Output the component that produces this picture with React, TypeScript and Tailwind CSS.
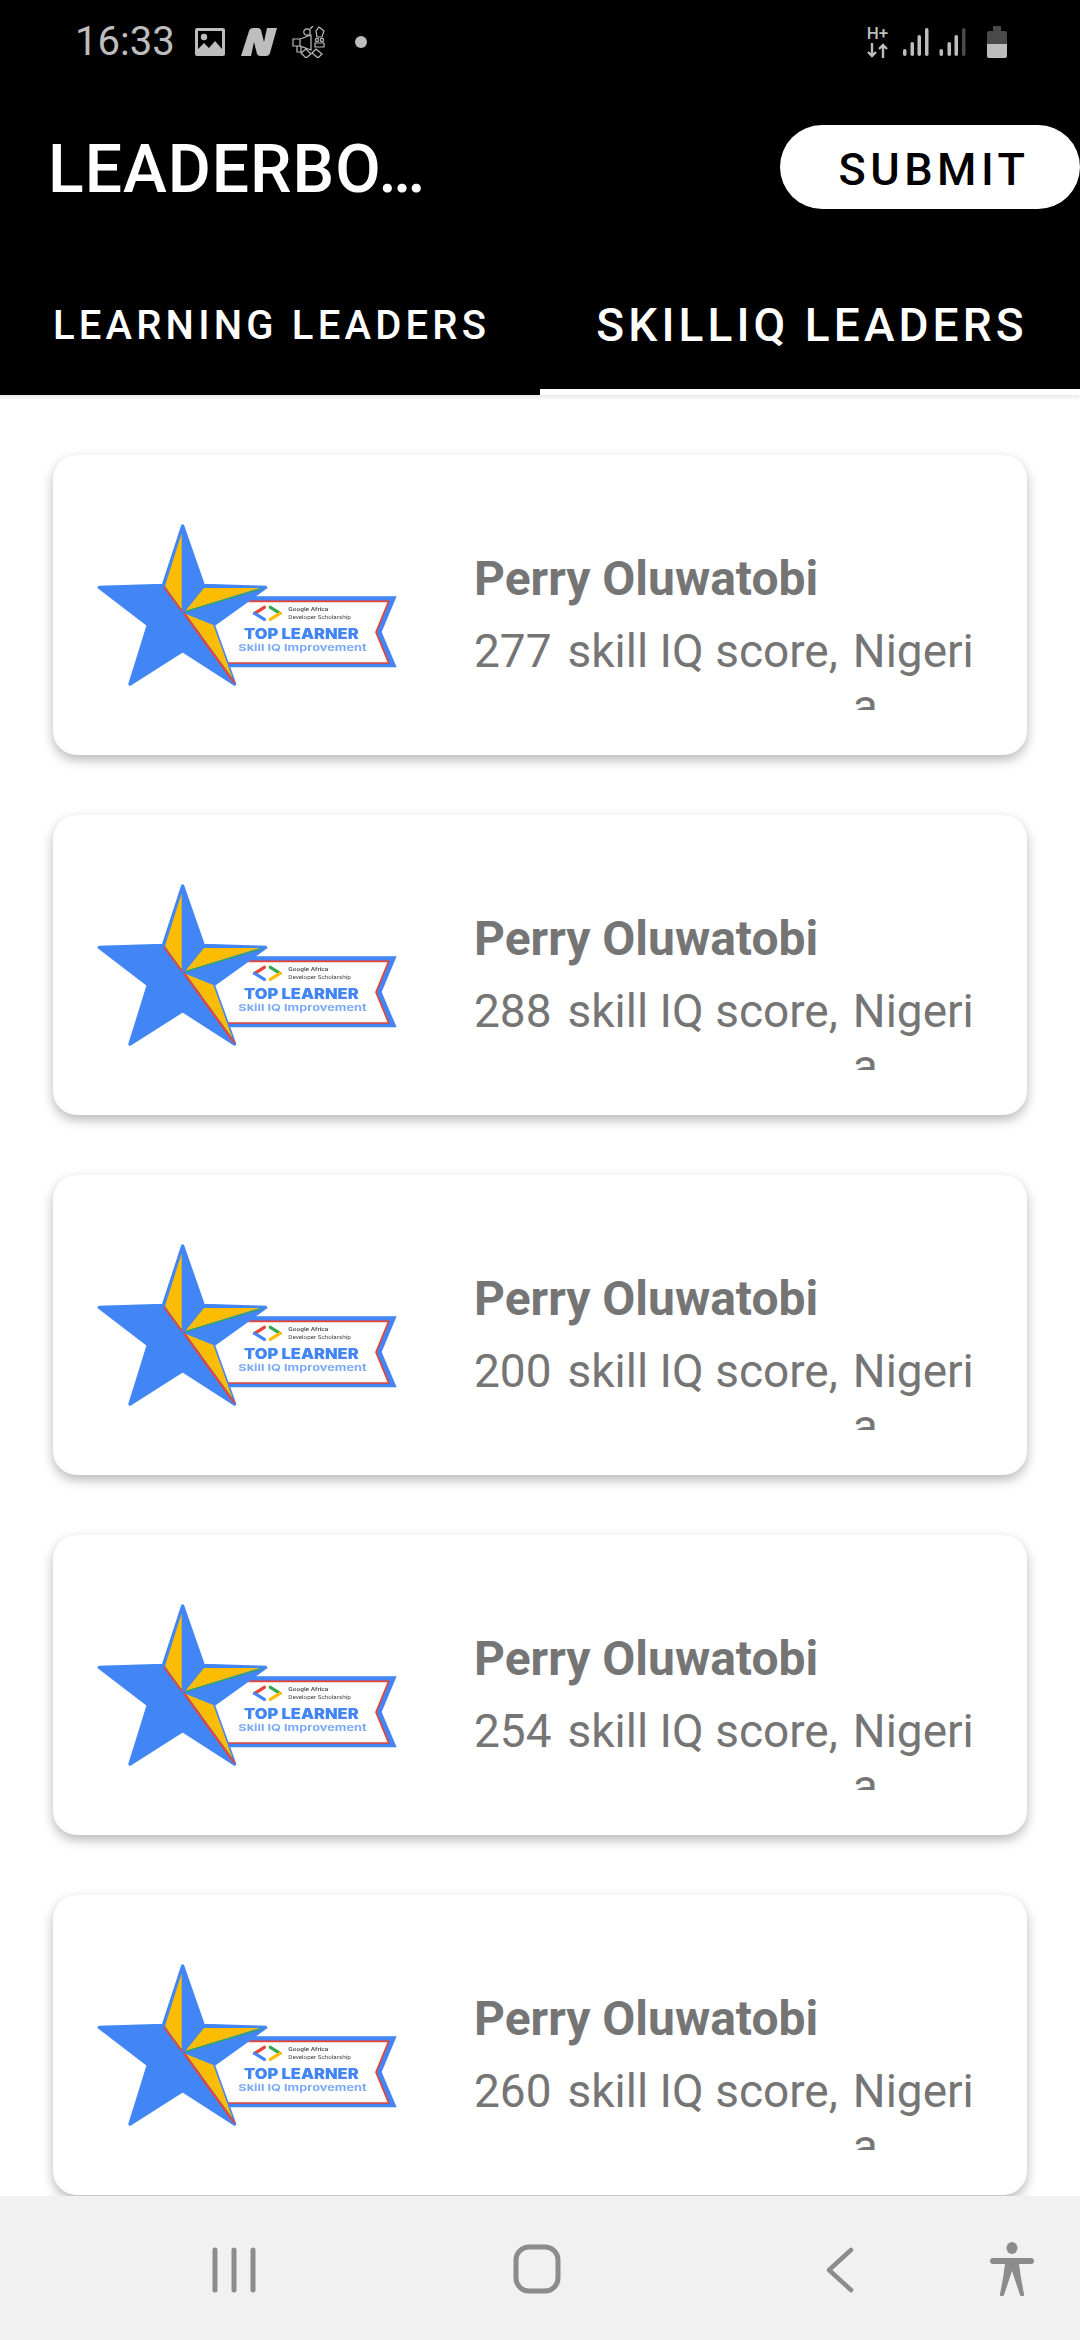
import React from "react"

const scores = [277, 288, 200, 254, 260]

const Badge = () => (
  <svg viewBox="0 0 1020 570" className="w-[340px] h-[190px] shrink-0 blur-[0.6px]">
    <polygon points="500,259 950,259 905,366 950,472 445,472 400,345" fill="#4285F4" />
    <polygon points="500,274 926,274 888,367 926,459 420,459 395,345" fill="#fff" />
    <polyline points="505,274 926,274 888,367 926,459 440,459" fill="none" stroke="#EA4335" strokeWidth="5" />
    <polygon
      points="308,48 370,226 557,232 400,345 464,522 308,422 150,522 205,345 58,232 250,226"
      fill="#4285F4"
      stroke="#4285F4"
      strokeWidth="10"
      strokeLinejoin="round"
    />
    <polygon points="305,70 305,298 255,228" fill="#FBBC04" />
    <polygon points="372,234 540,234 316,303" fill="#FBBC04" />
    <polygon points="318,312 400,345 458,505" fill="#FBBC04" />
    <line x1="252" y1="232" x2="308" y2="306" stroke="#EA4335" strokeWidth="5" />
    <line x1="312" y1="310" x2="464" y2="520" stroke="#EA4335" strokeWidth="6" />
    <line x1="316" y1="305" x2="546" y2="236" stroke="#34A853" strokeWidth="4" />
    <path d="M553 292 L524 310" stroke="#EA4335" strokeWidth="10" strokeLinecap="round" />
    <path d="M524 310 L553 328" stroke="#4285F4" strokeWidth="10" strokeLinecap="round" />
    <path d="M571 292 L600 310" stroke="#34A853" strokeWidth="10" strokeLinecap="round" />
    <path d="M600 310 L571 328" stroke="#FBBC04" strokeWidth="10" strokeLinecap="round" />
    <text x="625" y="302" textLength="120" lengthAdjust="spacingAndGlyphs" fontFamily="Roboto, sans-serif" fontSize="18" fontWeight="500" fill="#444">
      Google Africa
    </text>
    <text x="625" y="326" textLength="187" lengthAdjust="spacingAndGlyphs" fontFamily="Roboto, sans-serif" fontSize="18" fill="#444">
      Developer Scholarship
    </text>
    <text x="492" y="386" textLength="344" lengthAdjust="spacingAndGlyphs" fontFamily="Inter, sans-serif" fontSize="44" fontWeight="900" fill="#4285F4">
      TOP LEARNER
    </text>
    <text x="475" y="423" textLength="385" lengthAdjust="spacingAndGlyphs" fontFamily="Inter, sans-serif" fontSize="28" fontWeight="700" fill="#7BAAF7">
      Skill IQ Improvement
    </text>
  </svg>
)

const LeaderCard = ({ score }: { score: number }) => (
  <div className="h-[300px] shrink-0 flex items-start rounded-[24px] bg-white pl-[27px] pt-[55px] shadow-[0_5px_12px_rgba(0,0,0,0.28)]">
    <Badge />
    <div className="flex flex-col ml-[54px] pt-[41px]">
      <p className="text-[48px] leading-[56px] font-bold text-[#757575]">Perry Oluwatobi</p>
      <div className="flex items-start h-[86px] overflow-hidden text-[46px] leading-[55px] text-[#757575] mt-[17px]">
        <span>{score}</span>
        <span className="ml-[16px]">skill IQ score,</span>
        <span className="ml-[15px] w-[122px] break-all">Nigeria</span>
      </div>
    </div>
  </div>
)

const StatusBar = () => (
  <div className="h-[84px] flex items-center pl-[75px] pr-[73px] text-[#bdbdbd]">
    <span className="text-[40px] leading-none">16:33</span>
    <svg viewBox="0 0 30 28" className="w-[30px] h-[28px] ml-[20px]">
      <path fillRule="evenodd" d="M2 0h26a2 2 0 0 1 2 2v24a2 2 0 0 1-2 2H2a2 2 0 0 1-2-2V2a2 2 0 0 1 2-2zM3 3v18l6-6 5 5 6-7 7 8V3z" fill="#bdbdbd" />
      <circle cx="9" cy="9" r="3.2" fill="#bdbdbd" />
    </svg>
    <svg viewBox="0 0 36 28" className="w-[36px] h-[28px] ml-[16px]">
      <path d="M8 3q1-3 4-3h5q2 0 3 2l3 12 3-14h10l-7 25q-1 3-4 3h-6q-2 0-3-2l-3-12-3 14H0z" fill="#bdbdbd" />
    </svg>
    <svg viewBox="0 0 34 32" className="w-[34px] h-[32px] ml-[15px]" fill="none" stroke="#bdbdbd" strokeWidth="1.2">
      <path d="M1 13h7v7H1zM8 13l11-4v15l-11-4z" />
      <path d="M5 20v6h4v-6" />
      <circle cx="15" cy="6" r="3.2" />
      <path d="M18 3l3-3" />
      <path d="M27 1l5 4-2 6h-5l-1-6z" />
      <circle cx="25" cy="14" r="1.6" />
      <circle cx="30" cy="14" r="1.6" />
      <path d="M23 17h9v4h-9z" />
      <path d="M9 27l5-4 5 5-5 4zM24 23l6 5-4 4-6-5z" />
    </svg>
    <span className="w-[12px] h-[12px] rounded-full bg-[#bdbdbd] ml-[29px]" />
    <div className="ml-auto flex items-center">
      <div className="flex flex-col items-center w-[21px]">
        <span className="text-[17px] leading-[14px] font-medium">H+</span>
        <svg viewBox="0 0 21 15" className="w-[21px] h-[15px] mt-[3px]" fill="none" stroke="#bdbdbd" strokeWidth="2.4">
          <path d="M5 0v13M1 9l4 4 4-4" />
          <path d="M16 15V2M12 6l4-4 4 4" />
        </svg>
      </div>
      <svg viewBox="0 0 63 30" className="w-[63px] h-[30px] ml-[15px]">
        <rect x="0" y="22" width="3.5" height="7" rx="1.7" fill="#bdbdbd" />
        <rect x="7.5" y="15" width="3.5" height="14" rx="1.7" fill="#bdbdbd" />
        <rect x="14.5" y="8" width="3.5" height="21" rx="1.7" fill="#bdbdbd" />
        <rect x="22" y="1" width="3.5" height="28" rx="1.7" fill="#bdbdbd" />
        <rect x="36.5" y="22" width="3.5" height="7" rx="1.7" fill="#bdbdbd" />
        <rect x="44.5" y="15" width="3.5" height="14" rx="1.7" fill="#bdbdbd" />
        <rect x="51.5" y="8" width="3.5" height="21" rx="1.7" fill="#bdbdbd" />
        <rect x="59" y="1" width="3.5" height="28" rx="1.7" fill="#4a4a4a" />
      </svg>
      <svg viewBox="0 0 20 32" className="w-[20px] h-[32px] ml-[21px]">
        <path d="M6 1a1 1 0 0 1 1-1h6a1 1 0 0 1 1 1v4h4a2 2 0 0 1 2 2v11H0V7a2 2 0 0 1 2-2h4z" fill="#4a4a4a" />
        <path d="M0 18h20v12a2 2 0 0 1-2 2H2a2 2 0 0 1-2-2z" fill="#bdbdbd" />
      </svg>
    </div>
  </div>
)

const NavBar = () => (
  <div className="h-[144px] shrink-0 flex items-start bg-[#f1f1f1] pl-[212px] pt-[47px]">
    <svg viewBox="0 0 44 46" className="w-[44px] h-[46px] mt-[4px]" stroke="#8c8c8c" strokeWidth="5" strokeLinecap="round">
      <path d="M3 3v40M22 3v40M41 3v40" />
    </svg>
    <svg viewBox="0 0 48 50" className="w-[48px] h-[50px] ml-[257px] mt-[1px]" fill="none" stroke="#8c8c8c" strokeWidth="5">
      <rect x="3" y="3" width="42" height="44" rx="13" />
    </svg>
    <svg viewBox="0 0 30 46" className="w-[30px] h-[46px] ml-[263px] mt-[4px]" fill="none" stroke="#8c8c8c" strokeWidth="4.5" strokeLinecap="round" strokeLinejoin="round">
      <path d="M27 3 5 23l22 20" />
    </svg>
    <svg viewBox="0 0 44 54" className="w-[44px] h-[54px] ml-[136px] -mt-[1px]" fill="#8c8c8c">
      <ellipse cx="22" cy="6" rx="5.5" ry="6" />
      <path d="M3 16h38a3 3 0 0 1 0 6H29l2 14 3 16a2 2 0 0 1-4 1l-8-24-8 24a2 2 0 0 1-4-1l3-16 2-14H3a3 3 0 0 1 0-6z" />
    </svg>
  </div>
)

export default function App() {
  return (
    <div className="w-[1080px] h-[2340px] flex flex-col bg-white font-[Roboto,sans-serif] overflow-hidden">
      <header className="bg-black shrink-0 shadow-[0_3px_3px_rgba(0,0,0,0.08)]">
        <StatusBar />
        <div className="h-[166px] flex items-center justify-between pl-[48px]">
          <h1 className="text-[66px] leading-none font-medium tracking-[1px] text-white pt-[6px]">LEADERBO…</h1>
          <button className="w-[300px] h-[84px] rounded-full bg-white text-[45px] font-medium tracking-[4.5px] text-black pt-[6px] pl-[8px]">
            SUBMIT
          </button>
        </div>
        <div className="flex h-[145px]">
          <div className="w-1/2 flex items-center justify-center pt-[7px] pl-[3px]">
            <span className="text-[40px] font-medium tracking-[4.2px] text-white">LEARNING LEADERS</span>
          </div>
          <div className="w-1/2 flex items-center justify-center border-b-[6px] border-white pt-[12px] pl-[4px]">
            <span className="text-[46px] font-medium tracking-[4.1px] text-white">SKILLIQ LEADERS</span>
          </div>
        </div>
      </header>
      <main className="flex-1 flex flex-col gap-[60px] px-[53px] pt-[60px] overflow-hidden">
        {scores.map((score, i) => (
          <LeaderCard key={i} score={score} />
        ))}
      </main>
      <NavBar />
    </div>
  )
}
